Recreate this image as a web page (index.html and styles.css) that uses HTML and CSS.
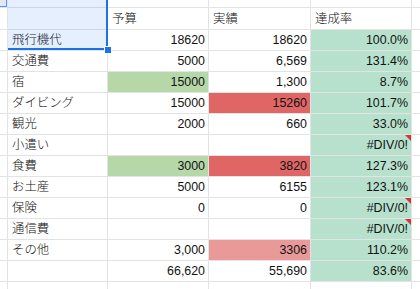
FILE: index.html
```html
<!DOCTYPE html>
<html lang="ja">
<head>
<meta charset="utf-8">
<link rel="stylesheet" href="styles.css">
</head>
<body>
<div class="sheet">
  <div class="grid">
    <!-- top partial row -->
    <div class="cell stub corner"></div><div class="cell"></div><div class="cell"></div><div class="cell"></div><div class="cell"></div><div class="cell"></div>
    <!-- header -->
    <div class="cell stub"></div><div class="cell"></div><div class="cell">予算</div><div class="cell">実績</div><div class="cell">達成率</div><div class="cell"></div>

    <div class="cell stub"></div><div class="cell">飛行機代</div><div class="cell num">18620</div><div class="cell num">18620</div><div class="cell num rate">100.0%</div><div class="cell"></div>
    <div class="cell stub"></div><div class="cell">交通費</div><div class="cell num">5000</div><div class="cell num">6,569</div><div class="cell num rate">131.4%</div><div class="cell"></div>
    <div class="cell stub"></div><div class="cell">宿</div><div class="cell num good">15000</div><div class="cell num">1,300</div><div class="cell num rate">8.7%</div><div class="cell"></div>
    <div class="cell stub"></div><div class="cell">ダイビング</div><div class="cell num">15000</div><div class="cell num bad">15260</div><div class="cell num rate">101.7%</div><div class="cell"></div>
    <div class="cell stub"></div><div class="cell">観光</div><div class="cell num">2000</div><div class="cell num">660</div><div class="cell num rate">33.0%</div><div class="cell"></div>
    <div class="cell stub"></div><div class="cell">小遣い</div><div class="cell num"></div><div class="cell num"></div><div class="cell num rate flag">#DIV/0!</div><div class="cell"></div>
    <div class="cell stub"></div><div class="cell">食費</div><div class="cell num good">3000</div><div class="cell num bad">3820</div><div class="cell num rate">127.3%</div><div class="cell"></div>
    <div class="cell stub"></div><div class="cell">お土産</div><div class="cell num">5000</div><div class="cell num">6155</div><div class="cell num rate">123.1%</div><div class="cell"></div>
    <div class="cell stub"></div><div class="cell">保険</div><div class="cell num">0</div><div class="cell num">0</div><div class="cell num rate flag">#DIV/0!</div><div class="cell"></div>
    <div class="cell stub"></div><div class="cell">通信費</div><div class="cell num"></div><div class="cell num"></div><div class="cell num rate flag">#DIV/0!</div><div class="cell"></div>
    <div class="cell stub"></div><div class="cell">その他</div><div class="cell num">3,000</div><div class="cell num warn">3306</div><div class="cell num rate">110.2%</div><div class="cell"></div>
    <div class="cell stub"></div><div class="cell"></div><div class="cell num">66,620</div><div class="cell num">55,690</div><div class="cell num rate">83.6%</div><div class="cell"></div>
    <!-- bottom partial row -->
    <div class="cell stub"></div><div class="cell"></div><div class="cell"></div><div class="cell"></div><div class="cell"></div><div class="cell"></div>
  </div>
  <div class="selection"></div>
  <div class="handle"></div>
</div>
</body>
</html>
```

FILE: styles.css
```css
html, body {
  margin: 0;
  padding: 0;
  background: #ffffff;
  overflow: hidden;
}

.sheet {
  position: relative;
  width: 420px;
  height: 289px;
  overflow: hidden;
  font-family: "Liberation Sans", "Noto Sans CJK JP", sans-serif;
  font-size: 12.4px;
  font-weight: 300;
  color: #111111;
}

.grid {
  display: grid;
  grid-template-columns: 7px 99px 100px 101px 100px 1fr;
  grid-template-rows: 7px 21px repeat(12, 20px) 1fr;
  gap: 1px;
  background: #e2e3e3;
  width: 420px;
  height: 289px;
}

.cell {
  position: relative;
  display: flex;
  align-items: center;
  padding: 1px 3px 0 4px;
  background: #ffffff;
  white-space: nowrap;
  overflow: hidden;
  line-height: 1;
}

.stub {
  padding: 0;
}

.corner {
  background: #dfe9fb;
  box-shadow: inset -1px -1px 0 #5b93ee;
}

.num {
  justify-content: flex-end;
}

.rate {
  background: #b7e1cd;
}

.good {
  background: #b6d7a8;
}

.bad {
  background: #e06666;
}

.warn {
  background: #ea9999;
}

.flag::after {
  content: "";
  position: absolute;
  top: 0;
  right: 0;
  border-top: 6px solid #d2362f;
  border-left: 6px solid transparent;
}

.selection {
  position: absolute;
  left: 8px;
  top: 0;
  width: 100px;
  height: 50px;
  box-sizing: border-box;
  border-right: 2px solid #1a73e8;
  border-bottom: 2px solid #1a73e8;
  background: rgba(14, 101, 235, 0.1);
  pointer-events: none;
}

.handle {
  position: absolute;
  left: 104px;
  top: 46px;
  width: 6px;
  height: 6px;
  background: #1a73e8;
  border: 1px solid #ffffff;
}
```
